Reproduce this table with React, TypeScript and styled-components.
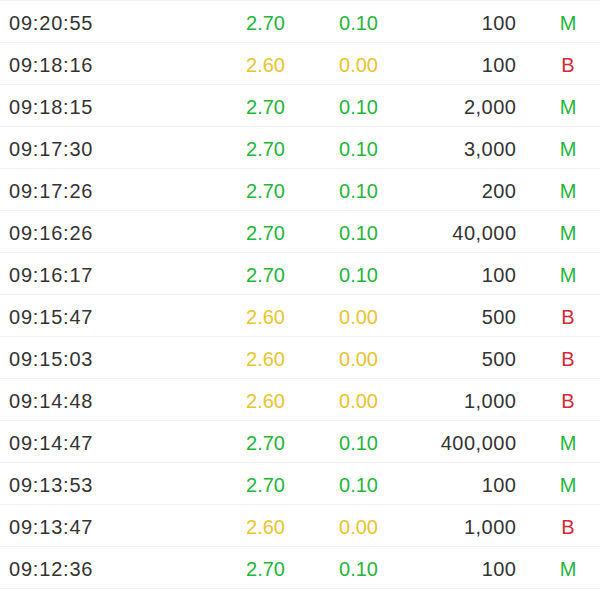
import React from "react";
import styled, { createGlobalStyle } from "styled-components";

const Global = createGlobalStyle`
  html, body { margin: 0; padding: 0; background: #ffffff; }
  body { font-family: "Liberation Sans", Arial, sans-serif; }
`;

type Tone = "up" | "flat";
type Side = "M" | "B";

const rows: [string, Tone, string, Side][] = [
  ["09:20:55", "up", "100", "M"],
  ["09:18:16", "flat", "100", "B"],
  ["09:18:15", "up", "2,000", "M"],
  ["09:17:30", "up", "3,000", "M"],
  ["09:17:26", "up", "200", "M"],
  ["09:16:26", "up", "40,000", "M"],
  ["09:16:17", "up", "100", "M"],
  ["09:15:47", "flat", "500", "B"],
  ["09:15:03", "flat", "500", "B"],
  ["09:14:48", "flat", "1,000", "B"],
  ["09:14:47", "up", "400,000", "M"],
  ["09:13:53", "up", "100", "M"],
  ["09:13:47", "flat", "1,000", "B"],
  ["09:12:36", "up", "100", "M"],
];

const GREEN = "#25b53a";
const YELLOW = "#e8c42e";
const RED = "#d22a36";

const List = styled.div`
  width: 600px;
  border-top: 1px solid #f3f3f3;
`;

const Row = styled.div`
  display: grid;
  grid-template-columns: 180px 96px 93px 138px 64px;
  align-items: center;
  height: 37px;
  padding-top: 4px;
  padding-left: 9px;
  border-bottom: 1px solid #f0f0f0;
  font-size: 20px;
`;

const Time = styled.span`
  color: #333333;
  letter-spacing: 0.8px;
`;

const Num = styled.span<{ $tone: Tone }>`
  text-align: right;
  color: ${(p) => (p.$tone === "up" ? GREEN : YELLOW)};
`;

const Vol = styled.span`
  text-align: right;
  color: #333333;
  letter-spacing: 0.5px;
  margin-right: -0.5px;
`;

const Flag = styled.span<{ $side: Side }>`
  text-align: center;
  padding-left: 40px;
  color: ${(p) => (p.$side === "M" ? GREEN : RED)};
`;

export default function App() {
  return (
    <>
      <Global />
      <List>
        {rows.map(([t, tone, vol, side]) => (
          <Row key={t}>
            <Time>{t}</Time>
            <Num $tone={tone}>{tone === "up" ? "2.70" : "2.60"}</Num>
            <Num $tone={tone}>{tone === "up" ? "0.10" : "0.00"}</Num>
            <Vol>{vol}</Vol>
            <Flag $side={side}>{side}</Flag>
          </Row>
        ))}
      </List>
    </>
  );
}
